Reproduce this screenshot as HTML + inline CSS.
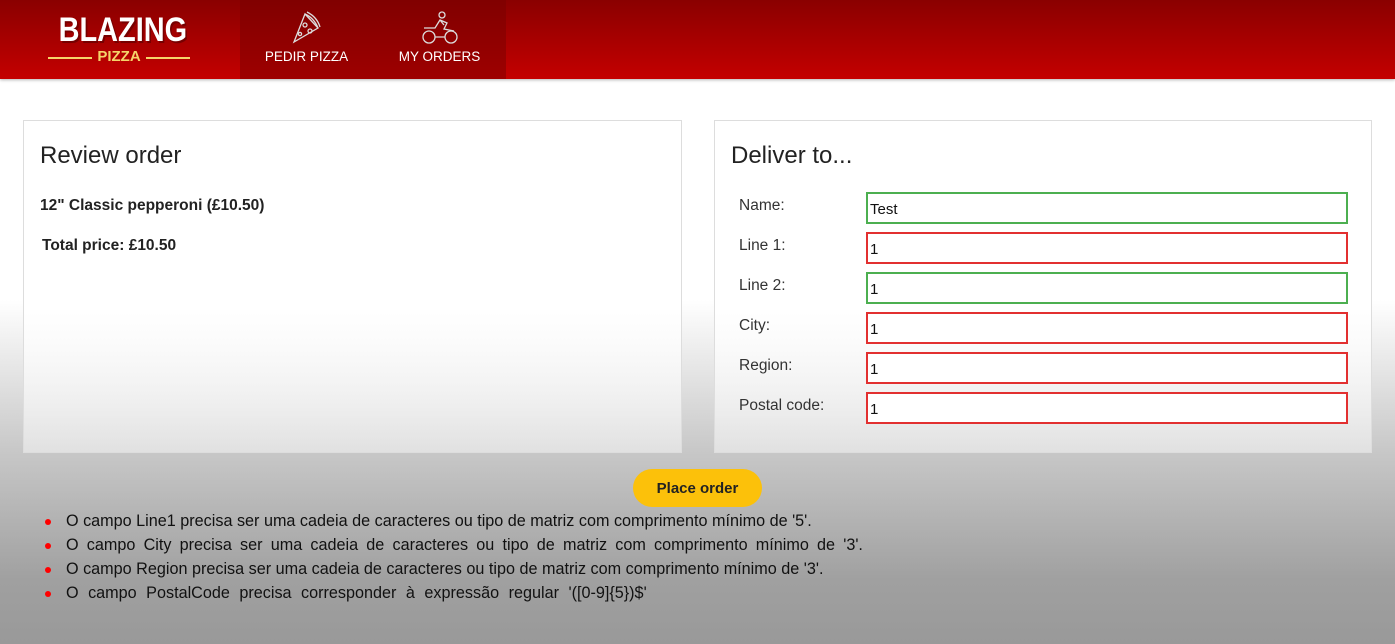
<!DOCTYPE html>
<html><head><meta charset="utf-8"><style>
*{box-sizing:border-box}
body{margin:0;width:1395px;height:644px;overflow:hidden;font-family:"Liberation Sans",sans-serif;background:linear-gradient(to bottom,#fff 0,#fff 300px,#c8c8c8 450px,#a0a0a0 580px,#999 644px);position:relative}
.top{position:absolute;left:0;top:0;width:1395px;height:79px;background:linear-gradient(to bottom,#8a0000,#c40000);box-shadow:0 1px 3px rgba(0,0,0,.3)}
.logo{position:absolute;left:48px;top:14px;width:142px;text-align:center}
.logo .b{color:#fff;font:bold 34px/32px "Liberation Sans Narrow","Liberation Sans",sans-serif;text-shadow:2px 2px 0 #700;transform:scaleX(0.85)}
.logo .p{color:#f5d46a;font:bold 15px/16px "Liberation Sans",sans-serif;position:relative;margin-top:3px}
.logo .p:before,.logo .p:after{content:"";position:absolute;top:8px;width:44px;height:1.5px;background:#f5d46a}
.logo .p:before{left:0}.logo .p:after{right:0}
.nav{position:absolute;left:240px;top:0;width:266px;height:79px;background:rgba(120,0,0,.5)}
.nav>div{position:absolute;top:0;height:79px;color:#fff;font-size:13.5px;text-align:center}
.nav svg{display:block;margin:10px auto 0}
.panel{position:absolute;top:120px;height:333px;border:1px solid #ddd;background:linear-gradient(to bottom,rgba(255,255,255,1) 0,rgba(255,255,255,1) 190px,rgba(235,235,235,.7) 333px)}
h2{font-weight:normal;font-size:24px;margin:0;position:absolute;left:16px;top:21px;color:#222}
.lbl{position:absolute;left:24px;font-size:15.5px;color:#333}
.inp{position:absolute;left:151px;width:482px;height:32px;border:2px solid #e23030;background:#fff;font-size:15px;padding:7px 2px;color:#111}
.inp.g{border-color:#4caf50}
.btn{position:absolute;left:633px;top:469px;width:129px;height:38px;border-radius:19px;background:#fcc10a;font-weight:bold;font-size:15px;text-align:center;line-height:39px;color:#222}
ul{position:absolute;left:45px;top:511px;margin:0;padding:0;list-style:none;font-size:16.2px;color:#111}
li{height:24px;line-height:20px;position:relative;padding-left:21px}
li:before{content:"";position:absolute;left:0;top:8px;width:6px;height:6px;border-radius:3px;background:red}
</style></head><body>
<div class="top">
 <div class="logo"><div class="b">BLAZING</div><div class="p">PIZZA</div></div>
 <div class="nav">
  <div style="left:0;width:133px">
   <svg width="40" height="36" viewBox="0 0 40 36" fill="none" stroke="#ddd" stroke-width="1.3"><path d="M7 32 L18 4 L31 18 Z"/><path d="M18 4 Q27 8 31 18"/><path d="M20 2 Q30 7 33 17"/><circle cx="18" cy="15" r="2"/><circle cx="23" cy="21" r="2"/><circle cx="13" cy="24" r="1.6"/></svg>
   <div style="margin-top:3px">PEDIR PIZZA</div></div>
  <div style="left:133px;width:133px">
   <svg width="40" height="36" viewBox="0 0 40 36" fill="none" stroke="#ddd" stroke-width="1.3"><circle cx="9" cy="27" r="6"/><circle cx="31" cy="27" r="6"/><circle cx="22" cy="5" r="3"/><path d="M4 18 L15 18 L20 10 L27 13 L24 19 L34 21 M15 27 L25 27 M20 10 L24 15"/></svg>
   <div style="margin-top:3px">MY ORDERS</div></div>
 </div>
</div>
<div class="panel" style="left:23px;width:659px">
 <h2>Review order</h2>
 <div style="position:absolute;left:16px;top:76px;font-weight:bold;font-size:15.5px;color:#222">12" Classic pepperoni (£10.50)</div>
 <div style="position:absolute;left:18px;top:116px;font-weight:bold;font-size:15.5px;color:#222">Total price: £10.50</div>
</div>
<div class="panel" style="left:714px;width:658px">
 <h2>Deliver to...</h2>
 <div class="lbl" style="top:76px">Name:</div><div class="inp g" style="top:71px">Test</div>
 <div class="lbl" style="top:116px">Line 1:</div><div class="inp" style="top:111px">1</div>
 <div class="lbl" style="top:156px">Line 2:</div><div class="inp g" style="top:151px">1</div>
 <div class="lbl" style="top:196px">City:</div><div class="inp" style="top:191px">1</div>
 <div class="lbl" style="top:236px">Region:</div><div class="inp" style="top:231px">1</div>
 <div class="lbl" style="top:276px">Postal code:</div><div class="inp" style="top:271px">1</div>
</div>
<div class="btn">Place order</div>
<ul>
<li>O campo Line1 precisa ser uma cadeia de caracteres ou tipo de matriz com comprimento mínimo de '5'.</li>
<li style="word-spacing:3.7px">O campo City precisa ser uma cadeia de caracteres ou tipo de matriz com comprimento mínimo de '3'.</li>
<li>O campo Region precisa ser uma cadeia de caracteres ou tipo de matriz com comprimento mínimo de '3'.</li>
<li style="word-spacing:5px">O campo PostalCode precisa corresponder à expressão regular '([0-9]{5})$'</li>
</ul>
</body></html>
